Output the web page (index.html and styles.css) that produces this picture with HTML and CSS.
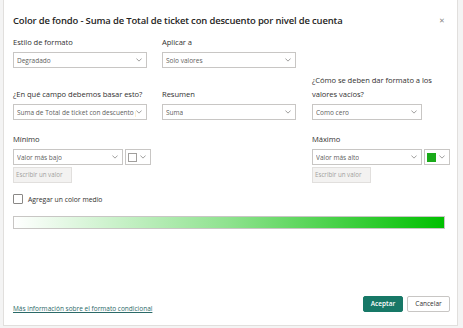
FILE: index.html
```html
<!DOCTYPE html>
<html lang="es">
<head>
<meta charset="utf-8">
<link rel="stylesheet" href="styles.css">
</head>
<body>
<div class="dialog">
  <div class="title-row">
    <h1 class="title">Color de fondo - Suma de Total de ticket con descuento por nivel de cuenta</h1>
    <span class="close">&#x2715;</span>
  </div>

  <div class="row row1">
    <div class="field c1">
      <div class="label">Estilo de formato</div>
      <div class="select w134"><span>Degradado</span><svg class="chev" viewBox="0 0 8 5"><path d="M0.5 0.5 L4 4 L7.5 0.5" fill="none" stroke="#605e5c" stroke-width="0.8"/></svg></div>
    </div>
    <div class="field c2">
      <div class="label">Aplicar a</div>
      <div class="select w134"><span>Solo valores</span><svg class="chev" viewBox="0 0 8 5"><path d="M0.5 0.5 L4 4 L7.5 0.5" fill="none" stroke="#605e5c" stroke-width="0.8"/></svg></div>
    </div>
  </div>

  <div class="row row2">
    <div class="field c1">
      <div class="label">¿En qué campo debemos basar esto?</div>
      <div class="select w134"><span class="clip">Suma de Total de ticket con descuento por nivel de cuenta</span><svg class="chev" viewBox="0 0 8 5"><path d="M0.5 0.5 L4 4 L7.5 0.5" fill="none" stroke="#605e5c" stroke-width="0.8"/></svg></div>
    </div>
    <div class="field c2">
      <div class="label">Resumen</div>
      <div class="select w134"><span>Suma</span><svg class="chev" viewBox="0 0 8 5"><path d="M0.5 0.5 L4 4 L7.5 0.5" fill="none" stroke="#605e5c" stroke-width="0.8"/></svg></div>
    </div>
    <div class="field c3">
      <div class="label wrap">¿Cómo se deben dar formato a los valores vacíos?</div>
      <div class="select w110"><span>Como cero</span><svg class="chev" viewBox="0 0 8 5"><path d="M0.5 0.5 L4 4 L7.5 0.5" fill="none" stroke="#605e5c" stroke-width="0.8"/></svg></div>
    </div>
  </div>

  <div class="row row3">
    <div class="field minmax">
      <div class="label">Mínimo</div>
      <div class="pair">
        <div class="select w110"><span>Valor más bajo</span><svg class="chev" viewBox="0 0 8 5"><path d="M0.5 0.5 L4 4 L7.5 0.5" fill="none" stroke="#605e5c" stroke-width="0.8"/></svg></div>
        <div class="color"><span class="swatch white"></span><svg class="chev" viewBox="0 0 8 5"><path d="M0.5 0.5 L4 4 L7.5 0.5" fill="none" stroke="#605e5c" stroke-width="0.8"/></svg></div>
      </div>
      <div class="input-disabled">Escribir un valor</div>
    </div>
    <div class="field minmax max">
      <div class="label">Máximo</div>
      <div class="pair">
        <div class="select w110"><span>Valor más alto</span><svg class="chev" viewBox="0 0 8 5"><path d="M0.5 0.5 L4 4 L7.5 0.5" fill="none" stroke="#605e5c" stroke-width="0.8"/></svg></div>
        <div class="color"><span class="swatch green"></span><svg class="chev" viewBox="0 0 8 5"><path d="M0.5 0.5 L4 4 L7.5 0.5" fill="none" stroke="#605e5c" stroke-width="0.8"/></svg></div>
      </div>
      <div class="input-disabled">Escribir un valor</div>
    </div>
  </div>

  <label class="check-row"><span class="checkbox"></span><span class="check-label">Agregar un color medio</span></label>

  <div class="gradient"></div>

  <div class="footer">
    <a class="link" href="#">Más información sobre el formato condicional</a>
    <div class="buttons">
      <button class="btn primary">Aceptar</button>
      <button class="btn secondary">Cancelar</button>
    </div>
  </div>
</div>
</body>
</html>
```

FILE: styles.css
```css
html, body {
  margin: 0;
  padding: 0;
  background: #f4f4f4;
  width: 463px;
  height: 328px;
  overflow: hidden;
  font-family: "Open Sans", "Noto Sans", sans-serif;
  color: #323130;
}

.dialog {
  margin-left: 3px;
  width: 455px;
  height: 326px;
  box-sizing: border-box;
  background: #fff;
  border-left: 1px solid #e1dfdd;
  border-right: 1px solid #e1dfdd;
  border-bottom: 1px solid #e1dfdd;
  padding: 0 0 0 9px;
  display: flex;
  flex-direction: column;
}

.title-row {
  display: flex;
  align-items: center;
  justify-content: space-between;
  height: 16px;
  margin-top: 12px;
  padding-right: 12px;
}

.title {
  margin: 0;
  font-size: 9.45px;
  font-weight: 600;
  color: #252423;
  white-space: nowrap;
  letter-spacing: -0.15px;
}

.close {
  font-size: 7px;
  color: #8a8886;
}

.row {
  display: flex;
}

.row1 { margin-top: 8px; }
.row2 { margin-top: 5px; align-items: flex-end; }
.row3 { margin-top: 13px; }

.field { display: flex; flex-direction: column; flex: none; }
.c1 { width: 134px; margin-right: 15px; }
.c2 { width: 134px; margin-right: 16px; }
.c3 { width: 130px; }

.minmax { width: 299px; }
.minmax.max { width: 140px; }

.label {
  font-size: 7.6px;
  line-height: 13px;
  color: #323130;
  margin-bottom: 3px;
  white-space: nowrap;
  letter-spacing: -0.05px;
}
.label.wrap { white-space: normal; line-height: 14px; }

.select {
  height: 16px;
  box-sizing: border-box;
  border: 1px solid #c8c6c4;
  background: #fff;
  display: flex;
  align-items: center;
  justify-content: space-between;
  padding: 0 4px 0 3px;
  font-size: 6.5px;
  color: #605e5c;
}
.select span { white-space: nowrap; overflow: hidden; }
.select .clip { max-width: 124px; text-overflow: clip; }
.w134 { width: 134px; }
.w110 { width: 110px; }

.chev { width: 6px; height: 4px; flex: none; }

.pair { display: flex; gap: 2px; }

.color {
  width: 26px;
  height: 16px;
  box-sizing: border-box;
  border: 1px solid #c8c6c4;
  display: flex;
  align-items: center;
  justify-content: space-between;
  padding: 0 4px 0 2px;
}
.swatch {
  width: 9px;
  height: 9px;
  box-sizing: border-box;
}
.swatch.white { border: 1px solid #a19f9d; background: #fff; }
.swatch.green { background: #1aaa1a; }

.input-disabled {
  margin-top: 2px;
  width: 59px;
  height: 16px;
  box-sizing: border-box;
  border: 1px solid #e1dfdd;
  background: #f3f2f1;
  color: #a19f9d;
  font-size: 6.2px;
  line-height: 14px;
  padding-left: 2px;
  white-space: nowrap;
}

.check-row {
  display: flex;
  align-items: center;
  margin-top: 10px;
  height: 12px;
}
.checkbox {
  width: 10px;
  height: 10px;
  box-sizing: border-box;
  border: 1px solid #8a8886;
  border-radius: 1px;
  background: #fff;
}
.check-label {
  margin-left: 5px;
  font-size: 6.8px;
  color: #323130;
}

.gradient {
  margin-top: 11px;
  width: 432px;
  height: 13px;
  box-sizing: border-box;
  border: 1px solid #c8c6c4;
  background: linear-gradient(to right, #ffffff 0%, #8ee28e 50%, #00c000 100%);
}

.footer {
  margin-top: auto;
  margin-bottom: 12px;
  display: flex;
  align-items: center;
  justify-content: space-between;
  padding-right: 7px;
}

.link {
  font-size: 6.5px;
  color: #2b6a68;
  text-decoration: underline;
  margin-top: 10px;
}

.buttons { display: flex; gap: 4px; }

.btn {
  height: 16px;
  font-family: inherit;
  font-size: 6.5px;
  padding: 0;
  border-radius: 2px;
}
.primary {
  width: 40px;
  background: #177867;
  color: #fff;
  border: 1px solid #177867;
  font-weight: 600;
}
.secondary {
  width: 43px;
  background: #fff;
  color: #323130;
  border: 1px solid #c8c6c4;
}
```
